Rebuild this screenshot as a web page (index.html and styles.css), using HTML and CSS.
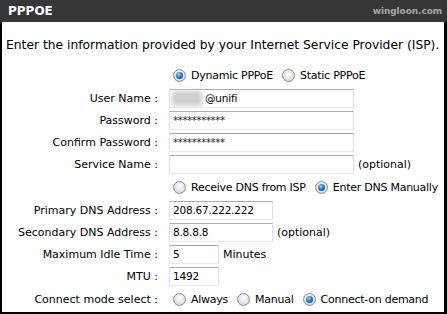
FILE: index.html
```html
<!DOCTYPE html>
<html>
<head>
<meta charset="utf-8">
<link rel="stylesheet" href="styles.css">
</head>
<body>
<div class="panel">
  <div class="head">
    <span class="title">PPPOE</span>
    <span class="brand">wingloon.com</span>
  </div>
  <div class="body">
    <p class="intro">Enter the information provided by your Internet Service Provider (ISP).</p>
    <div class="form">
      <div class="row radio-row">
        <span class="label"></span>
        <div class="ctl">
          <span class="opt"><span class="radio on"></span>Dynamic PPPoE</span>
          <span class="opt"><span class="radio"></span>Static PPPoE</span>
        </div>
      </div>
      <div class="row">
        <span class="label">User Name :</span>
        <div class="ctl"><span class="field wide user"><span class="blur"></span>@unifi</span></div>
      </div>
      <div class="row">
        <span class="label">Password :</span>
        <div class="ctl"><span class="field wide stars">***********</span></div>
      </div>
      <div class="row">
        <span class="label">Confirm Password :</span>
        <div class="ctl"><span class="field wide stars">***********</span></div>
      </div>
      <div class="row">
        <span class="label">Service Name :</span>
        <div class="ctl"><span class="field wide"></span><span class="note">(optional)</span></div>
      </div>
      <div class="row radio-row">
        <span class="label"></span>
        <div class="ctl">
          <span class="opt"><span class="radio"></span>Receive DNS from ISP</span>
          <span class="opt"><span class="radio on"></span>Enter DNS Manually</span>
        </div>
      </div>
      <div class="row">
        <span class="label">Primary DNS Address :</span>
        <div class="ctl"><span class="field mid">208.67.222.222</span></div>
      </div>
      <div class="row">
        <span class="label">Secondary DNS Address :</span>
        <div class="ctl"><span class="field mid">8.8.8.8</span><span class="note">(optional)</span></div>
      </div>
      <div class="row">
        <span class="label">Maximum Idle Time :</span>
        <div class="ctl"><span class="field small">5</span><span class="note">Minutes</span></div>
      </div>
      <div class="row">
        <span class="label">MTU :</span>
        <div class="ctl"><span class="field small">1492</span></div>
      </div>
      <div class="row radio-row">
        <span class="label">Connect mode select :</span>
        <div class="ctl">
          <span class="opt"><span class="radio"></span>Always</span>
          <span class="opt"><span class="radio"></span>Manual</span>
          <span class="opt"><span class="radio on"></span>Connect-on demand</span>
        </div>
      </div>
    </div>
  </div>
</div>
</body>
</html>
```
FILE: styles.css
```css
html, body {
  margin: 0;
  padding: 0;
  background: #fff;
}
.panel {
  width: 447px;
  height: 314px;
  box-sizing: border-box;
  font-family: "DejaVu Sans", Verdana, sans-serif;
  font-size: 11px;
  color: #000;
  display: flex;
  flex-direction: column;
}
.head {
  height: 22px;
  background: #363636;
  display: flex;
  align-items: center;
  justify-content: space-between;
  padding: 0 5px 0 8px;
  flex: none;
}
.title {
  color: #fff;
  font-weight: bold;
  font-size: 12px;
}
.brand {
  color: #a8a8a8;
  font-weight: bold;
  font-size: 9px;
  letter-spacing: -0.1px;
}
.body {
  flex: 1;
  border: 2px solid #000;
  border-top: 0;
  border-right-width: 3px;
  padding: 0 0 0 4px;
}
.intro {
  margin: 16px 0 0 0;
  height: 14px;
  line-height: 14px;
  font-size: 12.3px;
}
.form {
  margin-top: 11px;
  display: flex;
  flex-direction: column;
}
.row {
  display: grid;
  grid-template-columns: 152px 1fr;
  column-gap: 11px;
  align-items: center;
  height: 22px;
}
.radio-row {
  height: 24px;
}
.label {
  text-align: right;
  white-space: nowrap;
}
.ctl {
  display: flex;
  align-items: center;
  white-space: nowrap;
}
.field {
  box-sizing: border-box;
  height: 19px;
  border: 1px solid;
  border-color: #abadb3 #dbdfe6 #e3e9ef #e2e3ea;
  padding: 0 3px;
  display: flex;
  align-items: center;
  background: #fff;
  font-size: 10.5px;
  letter-spacing: -0.2px;
}
.wide { width: 185px; }
.mid { width: 104px; }
.small { width: 50px; }
.stars {
  font-size: 10px;
  letter-spacing: -0.3px;
  color: #222;
}
.user {
  padding-left: 2px;
}
.blur {
  width: 30px;
  height: 15px;
  margin-right: 3px;
  background: #cfcfcf;
  filter: blur(2px);
}
.note {
  margin-left: 4px;
}
.opt {
  display: inline-flex;
  align-items: center;
  margin-right: 5px;
  letter-spacing: -0.25px;
}
.radio {
  width: 13px;
  height: 13px;
  box-sizing: border-box;
  border-radius: 50%;
  border: 1px solid #8f8f8f;
  background: radial-gradient(circle at 50% 40%, #ffffff 0%, #e8e8e8 45%, #c8c8c8 100%);
  margin: 0 5px 0 4px;
  position: relative;
}
.radio.on::after {
  content: "";
  position: absolute;
  left: 2px;
  top: 2px;
  width: 7px;
  height: 7px;
  border-radius: 50%;
  background: radial-gradient(circle at 40% 35%, #9fd3ff 0%, #2a7bc4 45%, #0c3f78 100%);
}
```
